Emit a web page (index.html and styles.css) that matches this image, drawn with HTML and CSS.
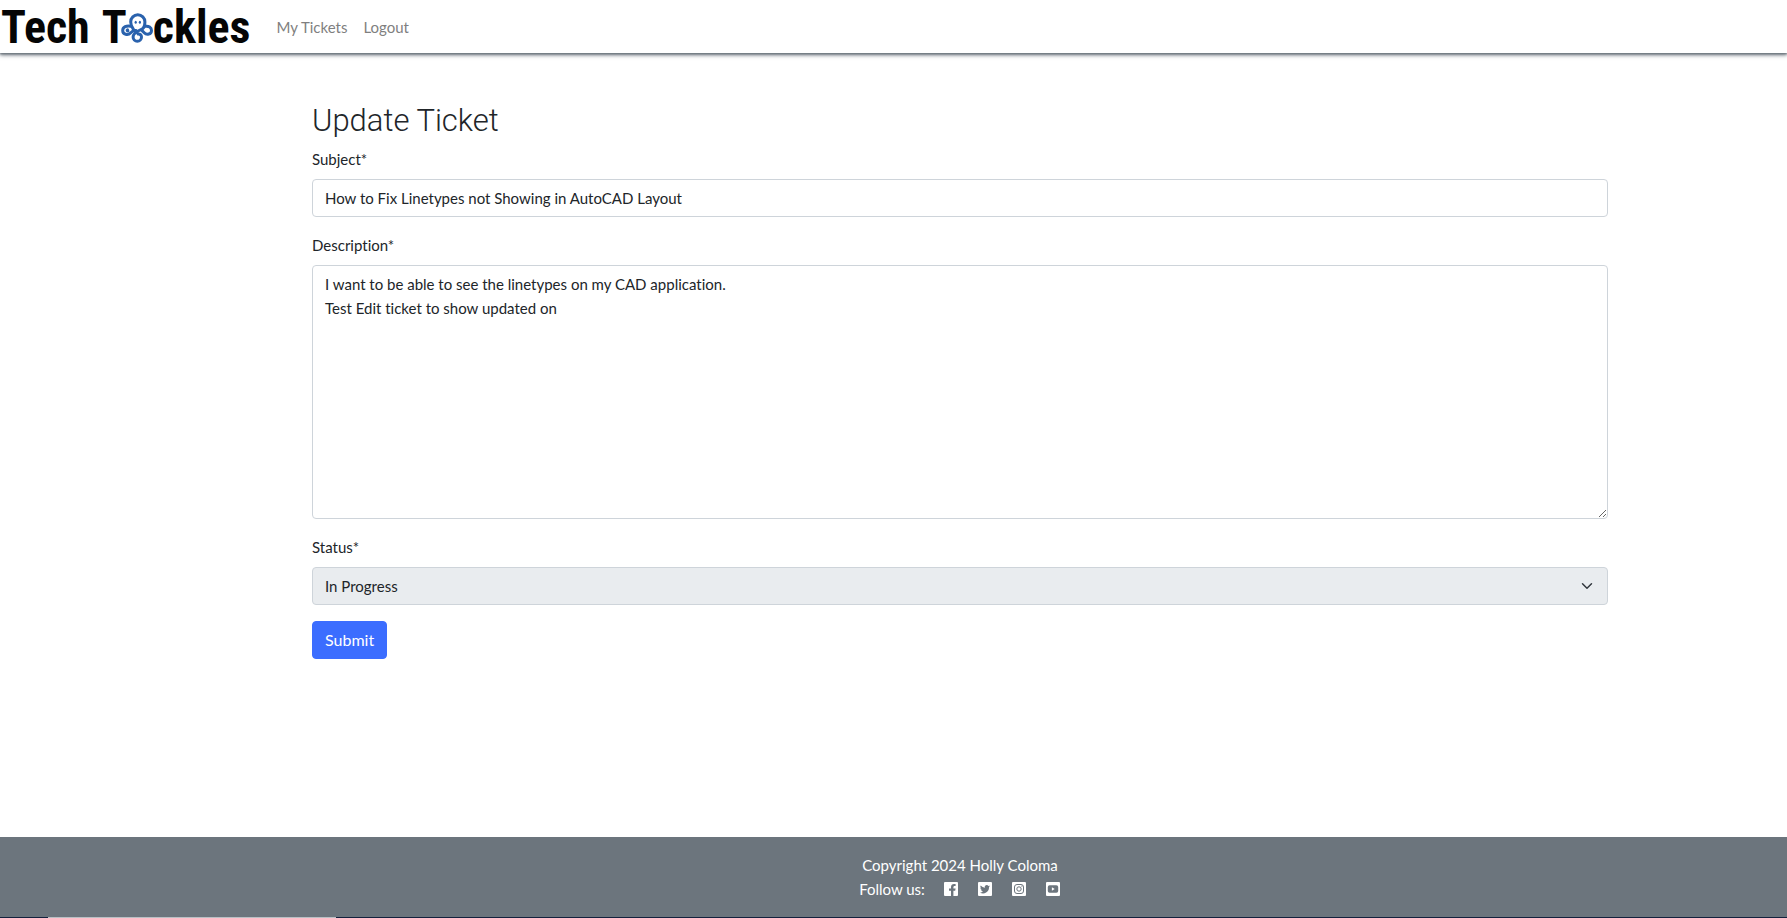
FILE: index.html
```html
<!DOCTYPE html>
<html lang="en">
<head>
<meta charset="utf-8">
<title>Update Ticket - Tech Tackles</title>
<link rel="stylesheet" href="styles.css">
</head>
<body>
<nav class="navbar">
  <a class="brand" href="#" aria-label="Tech Tackles">
    <span class="brand-word">Tech</span>
    <span class="brand-word">T</span>
    <svg class="brand-mark" viewBox="0 0 32 30" aria-hidden="true">
      <g fill="none" stroke="#2a62ad" stroke-width="3" stroke-linecap="round">
        <path d="M12.500 16.500C10.600 14 9.700 11.500 9.700 8.900a7.100 7.100 0 0 1 14.200 0c0 3-.3 5-1.900 6.400-2.600 2.300-9.900 3.400-9.900 8.600 0 2.600 1.800 4.300 4.200 4.300s4.200-1.700 4.200-4.300c0-1.900-1.400-3-3.400-2.800"/>
        <path d="M10 13.300C5.500 12.200 1.700 14 1.700 17.400c0 4.200 5.300 5.200 7.800 2.500 1.700-1.900 3.500-2.600 5.500-2.300"/>
        <path d="M6.500 16.800c-.6.500-.4 1.200.4 1.100"/>
        <path d="M24 13.300c3.800-.6 6.500 1 6.500 4.100 0 4-4.900 4.900-7.300 2.300l-2.600-2.600"/>
      </g>
      <g fill="#2a62ad"><ellipse cx="14.700" cy="9.200" rx="1.100" ry="1.500"/><ellipse cx="18.900" cy="9.200" rx="1.100" ry="1.500"/></g>
    </svg>
    <span class="brand-word">ckles</span>
  </a>
  <a class="nav-link" href="#">My Tickets</a>
  <a class="nav-link" href="#">Logout</a>
</nav>
<main class="content">
  <form class="ticket-form">
    <h1 class="title">Update Ticket</h1>
    <div class="field">
      <label for="subject">Subject*</label>
      <input class="control" id="subject" type="text" value="How to Fix Linetypes not Showing in AutoCAD Layout">
    </div>
    <div class="field">
      <label for="description">Description*</label>
      <textarea class="control" id="description" rows="10">I want to be able to see the linetypes on my CAD application.
Test Edit ticket to show updated on</textarea>
    </div>
    <div class="field">
      <label for="status">Status*</label>
      <select class="control select" id="status" disabled><option>In Progress</option></select>
    </div>
    <button class="submit" type="submit">Submit</button>
  </form>
</main>
<footer class="footer">
  <div>Copyright 2024 Holly Coloma</div>
  <div class="social">
    <span>Follow us:</span>
    <a href="#" aria-label="Facebook"><svg viewBox="0 0 16 16"><path fill="#fff" d="M2 1h12a1 1 0 0 1 1 1v12a1 1 0 0 1-1 1H2a1 1 0 0 1-1-1V2a1 1 0 0 1 1-1z"/><path fill="#6c757d" d="M8 15V9.700H6V7.500h2V6c0-2 1.200-3.100 3-3.100.8 0 1.600.1 1.600.1v1.900h-.9c-1 0-1.300.6-1.300 1.200v1.400h2.200l-.4 2.200h-1.800V15z"/></svg></a>
    <a href="#" aria-label="Twitter"><svg viewBox="0 0 16 16"><path fill="#fff" d="M2 1h12a1 1 0 0 1 1 1v12a1 1 0 0 1-1 1H2a1 1 0 0 1-1-1V2a1 1 0 0 1 1-1z"/><path fill="#6c757d" d="M13 5.100c-.4.200-.8.300-1.200.4.400-.3.700-.7.900-1.100-.4.200-.8.400-1.300.5a2 2 0 0 0-3.500 1.900A5.800 5.800 0 0 1 3.700 4.600a2 2 0 0 0 .6 2.800c-.3 0-.6-.1-.9-.3 0 1 .7 1.800 1.600 2-.3.100-.6.100-.9 0 .3.900 1 1.400 1.900 1.500A4.200 4.200 0 0 1 3 11.500a5.900 5.900 0 0 0 9-5.300c.4-.3.800-.7 1-1.100z"/></svg></a>
    <a href="#" aria-label="Instagram"><svg viewBox="0 0 16 16"><rect x="1" y="1" width="14" height="14" rx="1" fill="#fff"/><g fill="none" stroke="#6c757d"><rect x="3.500" y="3.500" width="9" height="9" rx="2.500"/><circle cx="8" cy="8" r="2.200"/></g><circle cx="10.900" cy="5.100" r=".6" fill="#6c757d"/></svg></a>
    <a href="#" aria-label="YouTube"><svg viewBox="0 0 16 16"><rect x="1" y="1" width="14" height="14" rx="1" fill="#fff"/><rect x="2.800" y="4.300" width="10.400" height="7.500" rx="1.800" fill="#6c757d"/><path fill="#fff" d="M6.900 6.300 9.700 8 6.900 9.700z"/></svg></a>
  </div>
</footer>
<div class="edge"><div class="edge-light"></div></div>
</body>
</html>
```
FILE: styles.css
```css
* { box-sizing: border-box; }
body {
  margin: 0;
  min-height: 100vh;
  display: flex;
  flex-direction: column;
  background: #fff;
  color: #212529;
  font: 400 15px/24px Lato, "Liberation Sans", sans-serif;
  font-variant-ligatures: none;
}
a { color: inherit; text-decoration: none; }
.navbar {
  display: flex;
  align-items: center;
  gap: 16px;
  height: 53px;
  box-shadow: 0 2px 4px #6c757d, 0 1px 2px #6c757d;
}
.brand {
  display: flex;
  align-items: center;
  padding-left: 1px;
  margin-right: 10px;
  color: #050505;
  font: 700 46px/50px "Roboto Condensed", "Liberation Sans Narrow", sans-serif;
}
.brand-word + .brand-word { margin-left: 12px; }
.brand-mark { width: 32px; height: 30px; margin: 2px 0 0 -6px; }
.nav-link { color: #7f7f7f; }
.content { flex: 1; padding: 48px 0 48px 133px; }
.ticket-form {
  width: 100%;
  max-width: 1320px;
  margin-left: 167px;
  padding: 0 12px;
}
.title {
  margin: 0 0 6px;
  font: 300 31px/40px Roboto, "Liberation Sans", sans-serif;
}
.field { margin-bottom: 16px; }
.field label { display: block; margin-bottom: 8px; }
.control {
  display: block;
  width: 100%;
  padding: 6px 12px;
  border: 1px solid #ced4da;
  border-radius: 4px;
  background-color: #fff;
  color: #212529;
  font: inherit;
}
textarea.control { resize: vertical; }
.select {
  appearance: none;
  opacity: 1;
  background: #e9ecef url("data:image/svg+xml,%3Csvg xmlns='http://www.w3.org/2000/svg' viewBox='0 0 16 16'%3E%3Cpath fill='none' stroke='%23343a40' stroke-linecap='round' stroke-linejoin='round' stroke-width='2' d='m2 5 6 6 6-6'/%3E%3C/svg%3E") no-repeat right 12px center / 16px 12px;
}
.submit {
  padding: 6px 12px;
  border: 1px solid #3b6dff;
  border-radius: 4px;
  background: #3b6dff;
  color: #fff;
  font: inherit;
  font-size: 16px;
}
.footer {
  padding: 16px 0 16px 133px;
  background: #6c757d;
  color: #fff;
  text-align: center;
}
.social { display: flex; justify-content: center; align-items: center; gap: 18px; }
.social a { display: flex; }
.social svg { width: 16px; height: 16px; }
.edge { height: 1px; padding-left: 48px; background: #14213d; }
.edge-light { width: 288px; height: 1px; background: #b9c0c5; }
```
